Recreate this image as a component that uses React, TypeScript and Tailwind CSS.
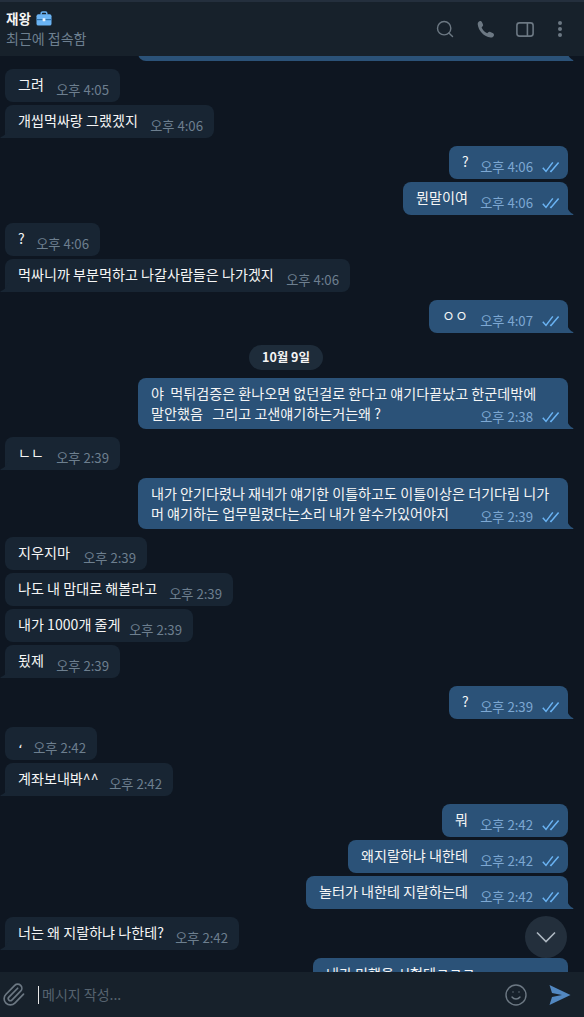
import { Search, Smile, Paperclip } from "lucide-react";

type Msg = {
  text?: string;
  lines?: string[];
  time: string;
  out?: boolean;
  tail?: boolean;
  w: string;
  mt: string;
  date?: string;
};

const messages: Msg[] = [
  { text: "그려", time: "오후 4:05", w: "w-[115px]", mt: "mt-2" },
  { text: "개씹먹싸랑 그랬겠지", time: "오후 4:06", w: "w-[209px]", mt: "mt-[3px]", tail: true },
  { text: "?", time: "오후 4:06", out: true, w: "w-[119px]", mt: "mt-2" },
  { text: "뭔말이여", time: "오후 4:06", out: true, w: "w-[165px]", mt: "mt-[3px]", tail: true },
  { text: "?", time: "오후 4:06", w: "w-[95px]", mt: "mt-2" },
  { text: "먹싸니까 부분먹하고 나갈사람들은 나가겠지", time: "오후 4:06", w: "w-[345px]", mt: "mt-[3px]", tail: true },
  { text: "ㅇㅇ", time: "오후 4:07", out: true, w: "w-[139px]", mt: "mt-2", tail: true },
  { date: "10월 9일", time: "", w: "", mt: "mt-3" },
  {
    lines: ["야  먹튀검증은 환나오면 없던걸로 한다고 얘기다끝났고 한군데밖에", "말안했음   그리고 고샌얘기하는거는왜 ?"],
    time: "오후 2:38",
    out: true,
    tail: true,
    w: "w-[430px]",
    mt: "mt-2",
  },
  { text: "ㄴㄴ", time: "오후 2:39", w: "w-[115px]", mt: "mt-2", tail: true },
  {
    lines: ["내가 안기다렸나 재네가 얘기한 이틀하고도 이틀이상은 더기다림 니가", "머 얘기하는 업무밀렸다는소리 내가 알수가있어야지"],
    time: "오후 2:39",
    out: true,
    tail: true,
    w: "w-[430px]",
    mt: "mt-2",
  },
  { text: "지우지마", time: "오후 2:39", w: "w-[142px]", mt: "mt-2" },
  { text: "나도 내 맘대로 해볼라고", time: "오후 2:39", w: "w-[228px]", mt: "mt-[3px]" },
  { text: "내가 1000개 줄게", time: "오후 2:39", w: "w-[188px]", mt: "mt-[3px]" },
  { text: "됬제", time: "오후 2:39", w: "w-[115px]", mt: "mt-[3px]", tail: true },
  { text: "?", time: "오후 2:39", out: true, w: "w-[119px]", mt: "mt-2", tail: true },
  { text: "،", time: "오후 2:42", w: "w-[92px]", mt: "mt-2" },
  { text: "계좌보내봐^^", time: "오후 2:42", w: "w-[168px]", mt: "mt-[3px]", tail: true },
  { text: "뭐", time: "오후 2:42", out: true, w: "w-[126px]", mt: "mt-2" },
  { text: "왜지랄하냐 내한테", time: "오후 2:42", out: true, w: "w-[220px]", mt: "mt-[3px]" },
  { text: "놀터가 내한테 지랄하는데", time: "오후 2:42", out: true, w: "w-[262px]", mt: "mt-[3px]", tail: true },
  { text: "너는 왜 지랄하냐 나한테?", time: "오후 2:42", w: "w-[234px]", mt: "mt-2", tail: true },
  { text: "내가 미행을 시험데ㅋㅋㅋ", time: "오후 2:42", out: true, w: "w-[255px]", mt: "mt-2" },
];

function DoubleCheck() {
  return (
    <svg width="18" height="12" viewBox="0 0 18 12" fill="none" className="shrink-0">
      <path d="M0.8 6.8 L4 10.4 L10.8 1.4" stroke="#6ab3f3" strokeWidth="1.5" />
      <path d="M8.2 9.8 L9 10.4 L16.6 1.4" stroke="#6ab3f3" strokeWidth="1.5" />
    </svg>
  );
}

function Tail({ out }: { out?: boolean }) {
  if (out) {
    return (
      <svg width="9" height="12" viewBox="0 0 9 12" className="absolute bottom-0 right-[-7px]">
        <path d="M0 0 C1 5 3 9 7 11 C7.6 11.4 7.4 12 7 12 L0 12 Z" fill="#2b5278" />
      </svg>
    );
  }
  return (
    <svg width="9" height="12" viewBox="0 0 9 12" className="absolute bottom-0 left-[-5px]">
      <path d="M9 0 C8 5 6 9 1 11 C0.2 11.4 0.4 12 1 12 L9 12 Z" fill="#182533" />
    </svg>
  );
}

function Bubble({ m }: { m: Msg }) {
  const timeColor = m.out ? "text-[#7da8d3]" : "text-[#6d7f8f]";
  return (
    <div className={`${m.mt} flex ${m.out ? "justify-end pr-4" : "justify-start pl-[5px]"}`}>
      <div
        className={`relative ${m.w} ${m.lines ? "h-[51px]" : "h-[33px]"} rounded-lg ${
          m.out ? "bg-[#2b5278]" : "bg-[#182533]"
        } ${m.tail ? (m.out ? "rounded-br-none" : "rounded-bl-none") : ""} grid pl-[13px] pr-2 pt-[5px] pb-[4px]`}
      >
        <div className="col-start-1 row-start-1 text-[14.1px] leading-5 text-[#f5f5f5] whitespace-pre">
          {m.lines ? m.lines.map((l) => <div key={l}>{l}</div>) : m.text}
        </div>
        <div
          className={`col-start-1 row-start-1 self-end justify-self-end flex items-center gap-[9px] text-[13.2px] leading-4 ${timeColor} ${
            m.out ? "" : "pr-[3px]"
          }`}
        >
          <span>{m.time}</span>
          {m.out && <DoubleCheck />}
        </div>
        {m.tail && <Tail out={m.out} />}
      </div>
    </div>
  );
}

export default function App() {
  return (
    <div
      className="flex h-[1017px] w-[584px] flex-col overflow-hidden bg-[#0e1621]"
      style={{ fontFamily: '"Noto Sans CJK KR", "Noto Sans", sans-serif' }}
    >
      {/* header */}
      <header className="z-10 flex h-[56px] shrink-0 items-center justify-between border-t-2 border-[#242f3d] bg-[#17212b] pl-[6px] pr-[21px]">
        <div className="mt-[-3px]">
          <div className="flex items-center gap-[5px] text-[13.5px] font-bold leading-[18px] text-[#f5f5f5]">
            재왕
            <svg width="16" height="15" viewBox="0 0 17 16">
              <path d="M5.5 4 V2.6 C5.5 1.6 6.2 1 7 1 H10 C10.8 1 11.5 1.6 11.5 2.6 V4" fill="none" stroke="#6ab3f3" strokeWidth="1.6" />
              <rect x="0.5" y="3.5" width="16" height="12" rx="2" fill="#6ab3f3" />
              <rect x="0.5" y="8.6" width="16" height="1.2" fill="#2b6ea8" />
              <rect x="7" y="7.6" width="3" height="3.2" rx="0.6" fill="#e6f3fd" />
            </svg>
          </div>
          <div className="mt-[3px] text-[14px] leading-[16px] text-[#6d7f8f]">최근에 접속함</div>
        </div>
        <div className="flex items-center text-[#6c7883]">
          <Search size={20} strokeWidth={1.7} />
          <svg width="19" height="19" viewBox="0 0 19 19" className="ml-[21px]">
            <path
              d="M4.3 1 C3 1 1.5 2.4 1.7 4.2 C2.3 10.6 8 16.6 14.6 17.6 C16.4 17.8 18 16.4 18 15 C18 14 17.4 13.6 16.6 13.1 L14.4 11.9 C13.4 11.4 12.6 11.8 12 12.5 L11.2 13.3 C8.8 12.2 6.6 9.8 5.6 7.4 L6.4 6.6 C7.1 6 7.4 5.2 6.9 4.3 L5.9 2.1 C5.5 1.4 5.1 1 4.3 1 Z"
              fill="currentColor"
            />
          </svg>
          <svg width="18" height="15" viewBox="0 0 18 15" fill="none" className="ml-[21px]">
            <rect x="0.9" y="0.9" width="16.2" height="13.2" rx="2.6" stroke="currentColor" strokeWidth="1.6" />
            <rect x="10.6" y="1" width="1.6" height="13" fill="currentColor" />
          </svg>
          <svg width="6" height="18" viewBox="0 0 6 18" className="ml-[23px]">
            <circle cx="3" cy="3" r="2" fill="currentColor" />
            <circle cx="3" cy="9" r="2" fill="currentColor" />
            <circle cx="3" cy="15" r="2" fill="currentColor" />
          </svg>
        </div>
      </header>

      {/* messages */}
      <main className="relative flex-1 overflow-hidden">
        <div>
          <div className="mt-[-46px] flex justify-end pr-4">
            <div className="relative h-[51px] w-[430px] rounded-lg rounded-br-none bg-[#2b5278]">
              <Tail out />
            </div>
          </div>
          {messages.map((m, i) =>
            m.date ? (
              <div key={i} className={`${m.mt} flex justify-center pr-3`}>
                <div className="flex h-[25px] w-[74px] items-center justify-center rounded-full bg-[#1e2c3a] text-[12.5px] font-bold text-[#f5f5f5]">
                  {m.date}
                </div>
              </div>
            ) : (
              <Bubble key={i} m={m} />
            ),
          )}
        </div>
        <button className="absolute right-[17px] top-[860px] flex h-[42px] w-[42px] items-center justify-center rounded-full bg-[#232f3c] text-[#aeb8c2]">
          <svg width="20" height="12" viewBox="0 0 20 12" fill="none">
            <path d="M1 1.5 L10 10.5 L19 1.5" stroke="currentColor" strokeWidth="1.6" />
          </svg>
        </button>
      </main>

      {/* input bar */}
      <footer className="z-10 flex h-[45px] shrink-0 items-center bg-[#17212b] pl-[1px] pr-[13px]">
        <Paperclip size={25} strokeWidth={1.6} className="text-[#6c7883]" />
        <div className="ml-[12px] h-[18px] w-px bg-[#e8e8e8]" />
        <div className="ml-[3px] flex-1 text-[14px] text-[#56636f]">메시지 작성...</div>
        <Smile size={24} strokeWidth={1.4} className="text-[#6c7883]" />
        <svg width="22" height="22" viewBox="0 0 22 22" className="ml-[21px]">
          <path d="M0.5 1 L21.5 11 L0.5 21 L3 13 L13 11 L3 9 Z" fill="#5288c1" />
        </svg>
      </footer>
    </div>
  );
}
